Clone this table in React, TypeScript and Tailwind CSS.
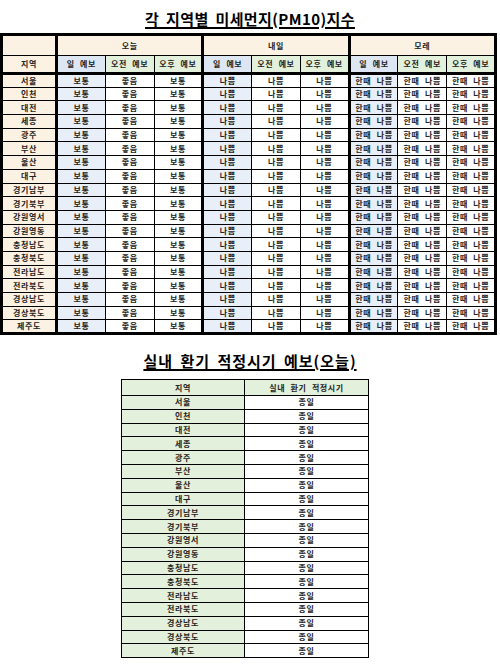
import React from "react";

const regions = [
  "서울", "인천", "대전", "세종", "광주", "부산", "울산", "대구",
  "경기남부", "경기북부", "강원영서", "강원영동", "충청남도", "충청북도",
  "전라남도", "전라북도", "경상남도", "경상북도", "제주도",
];

const groups = [
  { name: "오늘", values: ["보통", "좋음", "보통"] },
  { name: "내일", values: ["나쁨", "나쁨", "나쁨"] },
  { name: "모레", values: ["한때 나쁨", "한때 나쁨", "한때 나쁨"] },
];

const subHeads = ["일 예보", "오전 예보", "오후 예보"];

const cell = "border border-black text-center align-middle p-0 leading-none";

export default function App() {
  return (
    <div
      className="w-[500px] h-[666px] bg-white text-[#222] flex flex-col"
      style={{ fontFamily: '"Noto Sans CJK KR", "Noto Sans", sans-serif' }}
    >
      <h1 className="mt-[10px] h-[23px] text-center text-[15px] font-bold leading-[18px] text-black">
        <span className="underline underline-offset-2 decoration-[1.5px] tracking-[0.4px] [word-spacing:3px]">
          각 지역별 미세먼지(PM10)지수
        </span>
      </h1>

      {/* 지역별 예보 표 */}
      <table className="table-fixed border-collapse border-[3px] border-black w-[497px] text-[8px] font-bold tracking-[0.6px] [word-spacing:3px]">
        <colgroup>
          <col className="w-[55px]" />
          {Array.from({ length: 9 }).map((_, i) => (
            <col key={i} />
          ))}
        </colgroup>
        <thead>
          <tr className="h-[21px]">
            <th className={`${cell} bg-[#fcf2e4]`}></th>
            {groups.map((g) => (
              <th
                key={g.name}
                colSpan={3}
                className={`${cell} border-l-[3px] bg-[#fcf2e4] font-bold`}
              >
                {g.name}
              </th>
            ))}
          </tr>
          <tr className="h-[18px]">
            <th className={`${cell} border-b-[3px] bg-[#fcf2e4] font-bold`}>지역</th>
            {groups.map((g) =>
              subHeads.map((s, i) => (
                <th
                  key={g.name + s}
                  className={`${cell} border-b-[3px] font-bold ${
                    i === 0 ? "border-l-[3px] bg-[#dde7f3]" : "bg-[#e3f0dc]"
                  }`}
                >
                  {s}
                </th>
              ))
            )}
          </tr>
        </thead>
        <tbody>
          {regions.map((r) => (
            <tr key={r} className="h-[13.7px]">
              <td className={`${cell} bg-[#fcf2e4]`}>{r}</td>
              {groups.map((g) =>
                g.values.map((v, i) => (
                  <td
                    key={g.name + i}
                    className={`${cell} ${
                      i === 0 ? "border-l-[3px] bg-[#e9eff8]" : "bg-white"
                    }`}
                  >
                    {v}
                  </td>
                ))
              )}
            </tr>
          ))}
        </tbody>
      </table>

      <h2 className="mt-[17px] h-[27px] text-center text-[15px] font-bold leading-[18px] text-black">
        <span className="underline underline-offset-2 decoration-[1.5px] tracking-[1px] [word-spacing:3px]">
          실내 환기 적정시기 예보(오늘)
        </span>
      </h2>

      {/* 환기 시기 표 */}
      <table className="ml-[121px] table-fixed border-collapse border border-black w-[248px] text-[8px] font-bold tracking-[0.6px] [word-spacing:3px]">
        <colgroup>
          <col className="w-[123px]" />
          <col />
        </colgroup>
        <thead>
          <tr className="h-[16px]">
            <th className={`${cell} bg-[#e3f0dc] font-bold`}>지역</th>
            <th className={`${cell} bg-[#e3f0dc] font-bold`}>실내 환기 적정시기</th>
          </tr>
        </thead>
        <tbody>
          {regions.map((r) => (
            <tr key={r} className="h-[13.8px]">
              <td className={`${cell} bg-[#e3f0dc]`}>{r}</td>
              <td className={`${cell} bg-white`}>종일</td>
            </tr>
          ))}
        </tbody>
      </table>
    </div>
  );
}
